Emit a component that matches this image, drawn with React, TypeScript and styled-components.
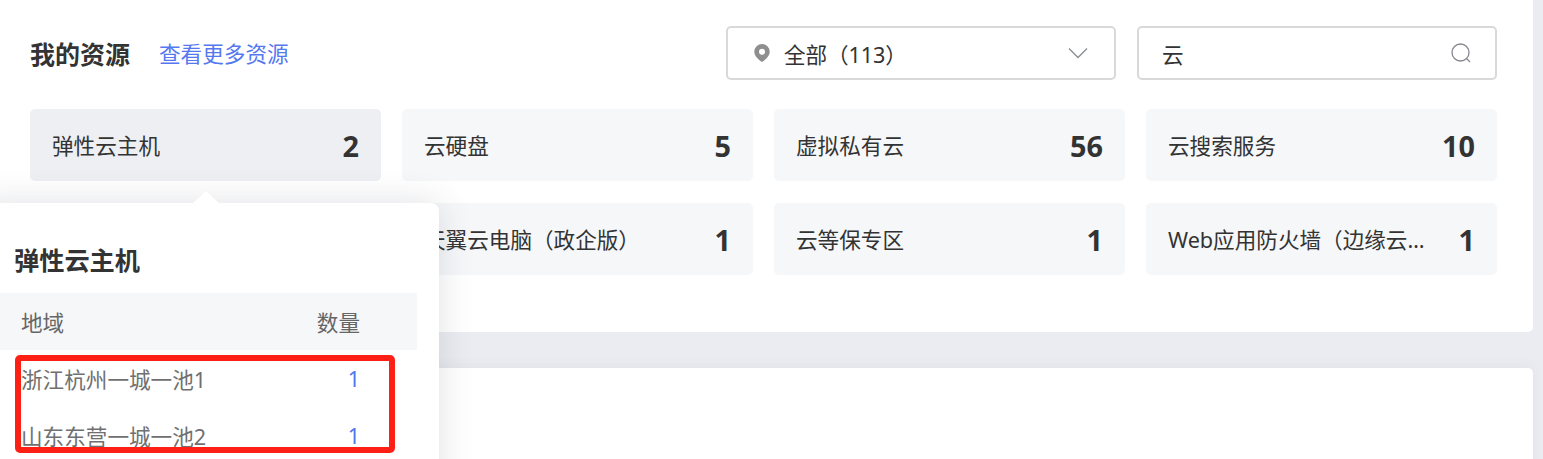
import { FC } from 'react';
import styled, { createGlobalStyle } from 'styled-components';

const GlobalStyle = createGlobalStyle`
  html, body {
    margin: 0;
    padding: 0;
    background: #ebecf1;
  }
  * {
    box-sizing: border-box;
  }
  body {
    font-family: "Noto Sans", "Noto Sans CJK SC", sans-serif;
    color: #333;
  }
`;

const resources = [
  { name: '弹性云主机', count: 2 },
  { name: '云硬盘', count: 5 },
  { name: '虚拟私有云', count: 56 },
  { name: '云搜索服务', count: 10 },
  { name: '', count: null },
  { name: '天翼云电脑（政企版）', count: 1 },
  { name: '云等保专区', count: 1 },
  { name: 'Web应用防火墙（边缘云版）', count: 1 },
];

const regions = [
  { name: '浙江杭州一城一池1', count: 1 },
  { name: '山东东营一城一池2', count: 1 },
];

const App: FC = () => {
  return (
    <PageSC>
      <GlobalStyle />
      <ResourcePanelSC>
        <HeaderSC>
          <TitleSC>我的资源</TitleSC>
          <MoreLinkSC>查看更多资源</MoreLinkSC>
          <RegionSelectSC>
            <PinIcon />
            <RegionTextSC>全部（113）</RegionTextSC>
            <ChevronIcon />
          </RegionSelectSC>
          <SearchBoxSC>
            <SearchTextSC>云</SearchTextSC>
            <SearchIcon />
          </SearchBoxSC>
        </HeaderSC>
        <GridSC>
          {resources.map((item, i) => (
            <CardSC key={i} $active={i === 0}>
              <CardNameSC>{item.name}</CardNameSC>
              <CardCountSC>{item.count}</CardCountSC>
            </CardSC>
          ))}
        </GridSC>
      </ResourcePanelSC>
      <BottomPanelSC />
      <PopoverSC>
        <PopoverTitleSC>弹性云主机</PopoverTitleSC>
        <TableHeadSC>
          <span>地域</span>
          <span>数量</span>
        </TableHeadSC>
        {regions.map(region => (
          <TableRowSC key={region.name}>
            <span>{region.name}</span>
            <RowCountSC>{region.count}</RowCountSC>
          </TableRowSC>
        ))}
      </PopoverSC>
      <HighlightSC />
    </PageSC>
  );
};

export default App;

const PinIcon = () => (
  <svg width="16" height="20" viewBox="0 0 16 20">
    <path
      fillRule="evenodd"
      fill="#8e8e8e"
      d="M8 1a7.7 7.7 0 0 1 7.7 7.7c0 3.6-3.4 7.6-7.7 10.3C3.7 16.300.3 12.300.3 8.700A7.700 7.700 0 0 1 8 1Zm0 4.700a3 3 0 1 0 0 6 3 3 0 0 0 0-6Z"
    />
  </svg>
);

const ChevronIcon = () => (
  <svg width="20" height="12" viewBox="0 0 20 12">
    <path d="M1 1.500 10 10.500 19 1.500" fill="none" stroke="#8a8d94" strokeWidth="1.300" />
  </svg>
);

const SearchIcon = () => (
  <svg width="20" height="20" viewBox="0 0 20 20">
    <circle cx="9.500" cy="9.500" r="8.500" fill="none" stroke="#85878d" strokeWidth="1.300" />
    <path d="M15.500 15.500 19 19" fill="none" stroke="#85878d" strokeWidth="1.300" />
  </svg>
);

const PageSC = styled('div')`
  position: relative;
  width: 1543px;
  height: 459px;
  overflow: hidden;
  padding-right: 10px;
`;

const ResourcePanelSC = styled('div')`
  height: 332px;
  background: #fff;
  border-radius: 0 0 5px 5px;
  padding: 26px 36px 0 30px;
`;

const HeaderSC = styled('div')`
  display: flex;
  align-items: center;
  height: 54px;
`;

const TitleSC = styled('div')`
  margin-top: 2px;
  font-size: 25px;
  font-weight: 700;
  line-height: 54px;
  color: #333;
`;

const MoreLinkSC = styled('a')`
  margin-left: 29px;
  margin-bottom: 2px;
  font-size: 21.6px;
  color: #5578f0;
  cursor: pointer;
`;

const RegionSelectSC = styled('div')`
  display: flex;
  align-items: center;
  width: 390px;
  height: 54px;
  margin-left: auto;
  padding: 0 26px 0 26px;
  background: #fff;
  border: 2px solid #d9d9dc;
  border-radius: 5px;
`;

const RegionTextSC = styled('span')`
  flex: 1;
  margin-left: 14px;
  font-size: 21.6px;
  letter-spacing: -0.1px;
  color: #333;
`;

const SearchBoxSC = styled('div')`
  display: flex;
  align-items: center;
  justify-content: space-between;
  width: 360px;
  height: 54px;
  margin-left: 21px;
  padding: 0 24px 0 23px;
  background: #fff;
  border: 2px solid #d9d9dc;
  border-radius: 5px;
`;

const SearchTextSC = styled('span')`
  font-size: 21.6px;
  color: #333;
`;

const GridSC = styled('div')`
  display: grid;
  grid-template-columns: repeat(4, minmax(0, 1fr));
  gap: 22px 21px;
  margin-top: 29px;
`;

const CardSC = styled('div')<{ $active?: boolean }>`
  display: flex;
  align-items: center;
  justify-content: space-between;
  height: 72px;
  padding: 0 22px;
  background: ${props => (props.$active ? '#eeeff3' : '#f6f7f9')};
  border-radius: 5px;
`;

const CardNameSC = styled('span')`
  max-width: 262px;
  margin-bottom: 2px;
  overflow: hidden;
  white-space: nowrap;
  text-overflow: ellipsis;
  font-size: 21.6px;
  color: #333;
`;

const CardCountSC = styled('span')`
  font-size: 28.800px;
  font-weight: 700;
  color: #333;
`;

const BottomPanelSC = styled('div')`
  height: 120px;
  margin-top: 36px;
  background: #fff;
  border-radius: 5px 5px 0 0;
  box-shadow: 0 -3px 12px rgba(60, 70, 100, 0.05);
`;

const PopoverSC = styled('div')`
  position: absolute;
  left: -22px;
  top: 203px;
  width: 461px;
  height: 300px;
  padding: 35px 22px 0 36px;
  background: #fff;
  border-radius: 8px;
  box-shadow: 0 0 34px rgba(60, 66, 90, 0.16);

  &::before {
    content: '';
    position: absolute;
    left: 215px;
    top: -12px;
    border-left: 13px solid transparent;
    border-right: 13px solid transparent;
    border-bottom: 12px solid #fff;
  }
`;

const PopoverTitleSC = styled('div')`
  font-size: 25.200px;
  font-weight: 700;
  line-height: 44px;
  color: #333;
`;

const TableHeadSC = styled('div')`
  display: flex;
  justify-content: space-between;
  align-items: center;
  height: 57px;
  margin: 11px 0 0 -14px;
  padding: 0 57px 0 21px;
  background: #f6f7f9;
  font-size: 21.6px;
  color: #666;
`;

const TableRowSC = styled('div')`
  display: flex;
  justify-content: space-between;
  align-items: center;
  height: 57px;
  margin-left: -14px;
  padding: 0 57px 0 21px;
  font-size: 21.6px;
  color: #707070;
`;

const RowCountSC = styled('span')`
  color: #4f78ec;
`;

const HighlightSC = styled('div')`
  position: absolute;
  left: 15px;
  top: 355px;
  width: 380px;
  height: 98px;
  border: 6px solid #ff2015;
  border-radius: 5px;
`;
